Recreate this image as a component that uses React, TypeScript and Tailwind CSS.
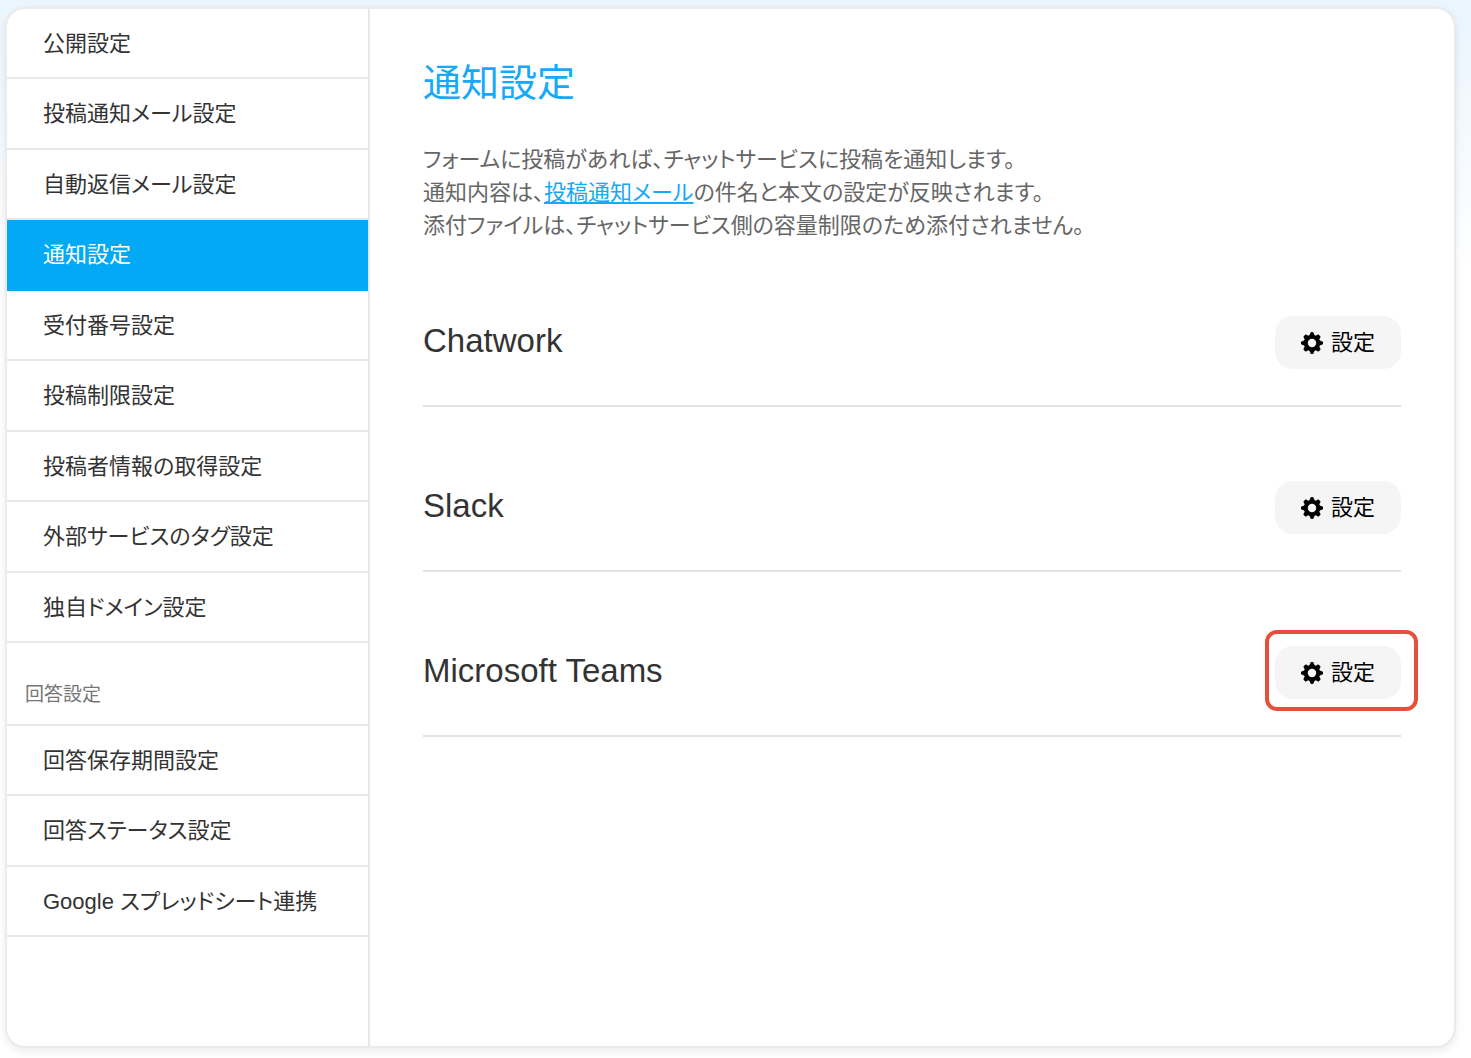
import clsx from 'clsx';

const formMenu = [
  '公開設定',
  '投稿通知メール設定',
  '自動返信メール設定',
  '通知設定',
  '受付番号設定',
  '投稿制限設定',
  '投稿者情報の取得設定',
  '外部サービスのタグ設定',
  '独自ドメイン設定',
];

const answerMenu = ['回答保存期間設定', '回答ステータス設定', 'Google スプレッドシート連携'];

const services = [
  { name: 'Chatwork' },
  { name: 'Slack' },
  { name: 'Microsoft Teams', highlighted: true },
];

function GearIcon() {
  return (
    <svg viewBox="0 0 24 24" className="size-[22px] fill-current" aria-hidden="true">
      <path
        fillRule="evenodd"
        d="M11.300 0h1.400q.7 0 .9.700l1.100 2.700 1.500.6 2.200-1.200q.6-.3 1.100.2l1.500 1.500q.5.500.2 1.100L20 7.800l.6 1.500 2.700 1.100q.7.200.7.900v1.400q0 .7-.7.900l-2.700 1.100-.6 1.500 1.200 2.200q.3.600-.2 1.100l-1.500 1.500q-.5.500-1.100.2L16.200 20l-1.500.6-1.100 2.700q-.2.700-.9.700h-1.400q-.7 0-.9-.7l-1.100-2.700-1.500-.6-2.200 1.200q-.6.300-1.100-.2L3 19.500q-.5-.5-.2-1.100L4 16.200l-.6-1.500-2.700-1.100q-.7-.2-.7-.9v-1.400q0-.7.700-.9l2.700-1.100L4 7.800 2.800 5.600q-.3-.6.2-1.100L4.500 3q.5-.5 1.100-.2L7.800 4l1.500-.6L10.400.7q.2-.7.900-.7zM12 7.400a4.600 4.600 0 1 0 0 9.200 4.600 4.600 0 0 0 0-9.200z"
      />
    </svg>
  );
}

function MenuList({ items, active }: { items: string[]; active?: string }) {
  return (
    <ul>
      {items.map((item) => (
        <li
          key={item}
          className={clsx(
            'flex border-b-2 odd:min-h-[70px] even:min-h-[71px]',
            item === active ? 'border-[#03a9f4] bg-[#03a9f4] text-white' : 'border-[#e8e8e8]',
          )}
        >
          <a
            href="#"
            aria-current={item === active ? 'page' : undefined}
            className="flex flex-1 items-center px-9"
          >
            {item}
          </a>
        </li>
      ))}
    </ul>
  );
}

function ServiceRow({ name, highlighted }: { name: string; highlighted?: boolean }) {
  return (
    <section className="flex items-start justify-between border-b-2 border-[#e2e2e2] pb-9">
      <h2 className="text-[33px] leading-[50px]">{name}</h2>
      <div className="relative">
        <button
          type="button"
          className="flex h-[53px] items-center gap-2 rounded-[18px] bg-[#f5f5f5] px-[26px] text-black"
        >
          <GearIcon />
          設定
        </button>
        {highlighted && (
          <span className="pointer-events-none absolute -top-4 -right-[17px] -bottom-3 -left-[10px] rounded-xl border-4 border-[#e5503c]" />
        )}
      </div>
    </section>
  );
}

export default function App() {
  return (
    <div className="flex min-h-screen bg-white bg-linear-to-b from-[#eaf5fe] to-white to-[270px] pt-[7px] pr-[15px] pb-[10px] pl-[5px] font-['Liberation_Sans','Noto_Sans_CJK_JP',sans-serif] text-[22px] leading-[33px] text-[#333] [font-feature-settings:'palt']">
      <div className="flex flex-1 overflow-hidden rounded-[20px] border-2 border-[#ebebeb] bg-white shadow-[0_3px_8px_rgba(0,0,0,0.08)]">
        <nav className="w-[363px] shrink-0 border-r-2 border-[#e8e8e8]">
          <MenuList items={formMenu} active="通知設定" />
          <h3 className="border-b-2 border-[#e8e8e8] px-[18px] pt-[38px] pb-[15px] text-[19px] leading-7 text-[#777]">
            回答設定
          </h3>
          <MenuList items={answerMenu} />
        </nav>

        <main className="flex-1 px-[53px] pt-[46px]">
          <h1 className="text-[38px] leading-[56px] text-[#16a9f7]">通知設定</h1>
          <p className="mt-8 text-[#666]">
            フォームに投稿があれば、チャットサービスに投稿を通知します。
            <br />
            通知内容は、
            <a href="#" className="text-[#16a9f7] underline">
              投稿通知メール
            </a>
            の件名と本文の設定が反映されます。
            <br />
            添付ファイルは、チャットサービス側の容量制限のため添付されません。
          </p>

          <div className="mt-[74px] flex flex-col gap-[74px]">
            {services.map((service) => (
              <ServiceRow key={service.name} {...service} />
            ))}
          </div>
        </main>
      </div>
    </div>
  );
}
